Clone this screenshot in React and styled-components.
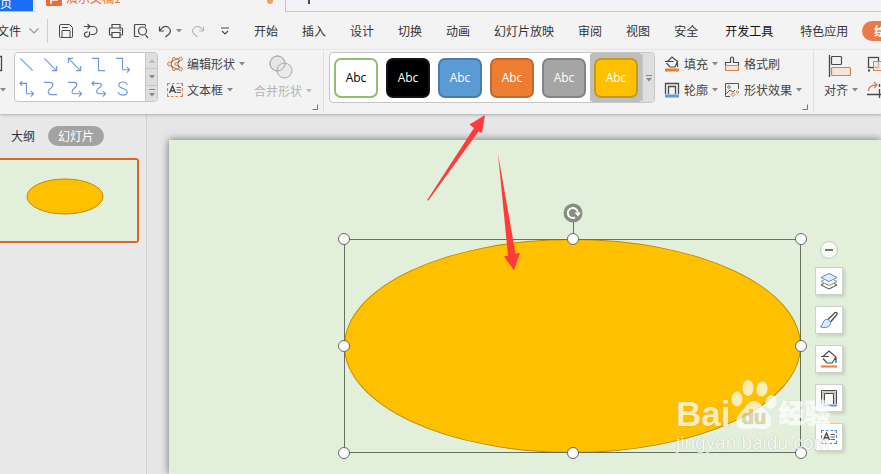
import { useState } from 'react';
import { styled, createGlobalStyle } from 'styled-components';

const GlobalStyle = createGlobalStyle`
  * {
    box-sizing: border-box;
  }

  body {
    margin: 0;
    overflow: hidden;
    background: #e6e6e6;
    color: #333;
    font-family: "Noto Sans CJK SC", sans-serif;
    font-size: 12px;
    line-height: 16px;
  }

  button {
    margin: 0;
    padding: 0;
    border: none;
    background: none;
    color: inherit;
    font: inherit;
    white-space: nowrap;
    cursor: pointer;
  }

  svg {
    display: block;
    flex: none;
  }
`;

const Page = styled.div`
  position: relative;
  display: flex;
  flex-direction: column;
  height: 100vh;
  overflow: hidden;
`;

/* tabs on top */

const TabBar = styled.div`
  display: flex;
  height: 12px;
  background: #f3f3f3;
`;

const HomeTab = styled.button`
  display: flex;
  align-items: flex-end;
  width: 37px;
  height: 12px;
  overflow: hidden;
  background: #1c6ff5;
  color: white;
  border-right: 4px solid #eceff5;
  border-bottom: 1px solid #bcc3d2;
`;

const FileTab = styled.button`
  display: flex;
  align-items: flex-end;
  gap: 4px;
  width: 248px;
  height: 6px;
  padding: 0 12px 0 9px;
  overflow: hidden;
  color: #e8703c;
`;

const TabName = styled.span`
  flex: 1;
  height: 16px;
  font-size: 12px;
  text-align: left;
`;

const TabRest = styled.div`
  flex: 1;
  display: flex;
  align-items: flex-start;
  padding-left: 22px;
  background: #f1f3f8;
  border-left: 1px solid #bcc5d5;
  border-bottom: 1px solid #c3cad6;
`;

/* menu */

const MenuBar = styled.nav`
  display: flex;
  align-items: center;
  height: 38px;
  background: #f3f3f3;
`;

const FileButton = styled.button`
  display: flex;
  justify-content: flex-end;
  flex: none;
  width: 21px;
  overflow: hidden;
`;

const ToolIcons = styled.div`
  display: flex;
  align-items: center;
  gap: 9px;
  flex: none;
  width: 207px;
  margin-left: 8px;
  padding-left: 10px;
  border-left: 1px solid #cfcfcf;
  height: 24px;
`;

const MenuItems = styled.div`
  display: flex;
  flex: none;
  gap: 24px;
`;

const WideItems = styled(MenuItems)`
  gap: 27px;
  margin-left: 27px;
`;

const MenuItem = styled.button`
  color: ${(p) => (p.$dark ? '#111' : '#333')};
`;

const ActiveMenu = styled.button`
  flex: none;
  height: 20px;
  margin-left: 14px;
  padding: 0 12px;
  border-radius: 10px;
  background: #e97a4a;
  color: white;
  font-weight: bold;
`;

/* ribbon */

const Ribbon = styled.div`
  position: relative;
  z-index: 1;
  display: flex;
  flex: none;
  height: 64px;
  background: #f3f3f3;
  box-shadow: 0 1px 3px rgba(0, 0, 0, 0.25);
`;

const EdgeTool = styled.button`
  display: flex;
  flex-direction: column;
  align-items: flex-start;
  gap: 16px;
  flex: none;
  width: 14px;
  padding-top: 5px;
`;

const Gallery = styled.div`
  display: flex;
  flex: none;
  height: ${(p) => p.$height}px;
  margin-top: 2px;
  overflow: hidden;
  background: white;
  border: 1px solid #c6c6c6;
  border-radius: 4px;
`;

const LineGrid = styled.div`
  display: grid;
  grid-template-columns: repeat(5, 24px);
  grid-template-rows: 24px 24px;
  width: 130px;
`;

const LineButton = styled.button`
  display: grid;
  place-items: center;
`;

const Scroller = styled.div`
  display: flex;
  flex-direction: column;
  width: 12px;
  background: #dedede;
  border-left: 1px solid #c6c6c6;
`;

const ScrollButton = styled.button`
  flex: 1;
  display: grid;
  place-items: center;

  & + & {
    border-top: 1px solid #c6c6c6;
  }
`;

const Rows = styled.div`
  display: grid;
  grid-template-columns: ${(p) => p.$columns || 'auto'};
  grid-template-rows: 26px 26px;
  flex: none;
  justify-items: start;
  padding-top: 1px;
  margin-left: 9px;
`;

const ToolButton = styled.button`
  display: flex;
  align-items: center;
  gap: 4px;
  color: #444;
`;

const TallButton = styled.button`
  display: flex;
  flex-direction: column;
  align-items: flex-start;
  gap: 4px;
  flex: none;
  align-self: flex-start;
  margin-left: ${(p) => (p.$muted ? 9 : 5)}px;
  padding-top: 5px;
  color: ${(p) => (p.$muted ? '#b5b5b5' : '#444')};

  > svg {
    margin-left: ${(p) => (p.$muted ? 15 : 4)}px;
  }
`;

const Label = styled.span`
  display: flex;
  align-items: center;
  gap: 4px;
`;

const Launcher = styled.button`
  flex: none;
  align-self: flex-end;
  margin-bottom: 4px;
`;

const Divider = styled.div`
  flex: none;
  width: 1px;
  height: 62px;
  margin: 0 5px;
  background: #e0e0e0;
`;

const StyleCell = styled.button`
  display: grid;
  place-items: center;
  width: 52px;
  border-radius: 3px;
  background: ${(p) => (p.$selected ? '#bebebe' : 'transparent')};
`;

const Swatch = styled.span`
  display: grid;
  place-items: center;
  width: 44px;
  height: 40px;
  border: 2px solid ${(p) => p.$edge};
  border-radius: 7px;
  background: ${(p) => p.$fill};
  color: ${(p) => p.$ink};
  font-family: "Open Sans", sans-serif;
`;

/* workspace */

const Workspace = styled.main`
  display: flex;
  flex: 1;
  min-height: 0;
`;

const Sidebar = styled.aside`
  flex: none;
  width: 147px;
  padding-top: 12px;
  background: #e8e8e8;
  border-right: 1px solid #d2d2d2;
`;

const SideTabs = styled.div`
  display: flex;
  align-items: center;
  gap: 13px;
  padding-left: 11px;
`;

const SideTab = styled.button`
  height: 20px;
  padding: ${(p) => (p.$active ? '0 10px' : '0')};
  border-radius: 10px;
  background: ${(p) => (p.$active ? '#a3a3a3' : 'none')};
  color: ${(p) => (p.$active ? 'white' : '#333')};
`;

const Thumb = styled.button`
  display: block;
  width: 139px;
  height: 85px;
  margin-top: 12px;
  padding: 0 0 9px 26px;
  border: 2px solid #d9682c;
  border-left: none;
  border-radius: 0 3px 3px 0;
  background: #e2efda;
`;

const Stage = styled.section`
  flex: 1;
  display: flex;
  min-width: 0;
  padding: 26px 0 0 22px;
  overflow: hidden;
`;

const Slide = styled.div`
  position: relative;
  flex: 1;
  background: #e2efda;
  box-shadow: 0 0 8px rgba(0, 0, 0, 0.55);
`;

const Selection = styled.div`
  position: absolute;
  left: 175px;
  top: 99px;
  width: 457px;
  height: 214px;
  outline: 1px solid #66705f;
  outline-offset: -1px;
`;

const Oval = styled.div`
  height: 100%;
  border: 1px solid #bc8c00;
  border-radius: 50%;
  background: #ffc000;
`;

const Handle = styled.span`
  position: absolute;
  z-index: 1;
  left: ${(p) => p.$x}%;
  top: ${(p) => p.$y}%;
  width: 12px;
  height: 12px;
  margin: -6px;
  border: 1px solid #666;
  border-radius: 50%;
  background: white;
`;

const Rotate = styled.button`
  position: absolute;
  left: 50%;
  top: -36px;
  width: 20px;
  margin-left: -10px;
`;

const FloatBar = styled.div`
  position: absolute;
  left: 646px;
  top: 101px;
  display: flex;
  flex-direction: column;
  align-items: center;
  gap: 11px;
`;

const Collapse = styled.button`
  display: grid;
  place-items: center;
  width: 18px;
  height: 18px;
  margin-bottom: -3px;
  border: 1px solid #c5c9c2;
  border-radius: 50%;
  background: #f8faf6;
`;

const FloatButton = styled.button`
  display: grid;
  place-items: center;
  width: 28px;
  height: 28px;
  border: 1px solid #ccd1cc;
  background: white;
  box-shadow: 2px 2px 3px rgba(0, 0, 0, 0.12);
`;

/* overlays */

const Arrows = styled.svg`
  position: absolute;
  z-index: 2;
  left: 420px;
  top: 110px;
  pointer-events: none;
`;

const Watermark = styled.div`
  position: absolute;
  z-index: 2;
  left: 507px;
  top: 240px;
  color: white;
  opacity: 0.72;
  font-family: "Liberation Sans", "Noto Sans CJK SC", sans-serif;
  text-shadow: 0 0 1px rgba(120, 120, 120, 0.8);
  pointer-events: none;
`;

const Brand = styled.div`
  display: flex;
  align-items: flex-end;
  height: 51px;
  font-size: 35px;
  line-height: 34px;
  font-weight: bold;
`;

const BrandName = styled.span`
  font-size: 26px;
  font-weight: 900;
  -webkit-text-stroke: 1px white;
`;

const Site = styled.div`
  font-size: 19px;
  line-height: 24px;
`;

const DARK = '#4a4a4a';
const ORANGE = '#d8824f';

const Svg = ({ w = 16, h = 16, color = DARK, children, ...rest }) => (
  <svg width={w} height={h} viewBox={`0 0 ${w} ${h}`} fill="none" stroke={color} aria-hidden="true" {...rest}>
    {children}
  </svg>
);

const Caret = ({ color = '#888' }) => (
  <Svg w={6} h={4}><path d="M0 0h6L3 3.5z" fill={color} stroke="none" /></Svg>
);

const LauncherIcon = () => (
  <Svg w={6} h={6} color="#777"><path d="M5.5 0.5v5h-5" /></Svg>
);

const Corner = ({ name }) => (
  <Launcher aria-label={name}><LauncherIcon /></Launcher>
);

const SaveIcon = () => (
  <Svg><path d="M3 1.5h8.5L14.5 4.5V13.5a1 1 0 0 1-1 1h-11a1 1 0 0 1-1-1V3a1.5 1.5 0 0 1 1.5-1.5zM4 14V7.5h8V14M4 4.5h6" /></Svg>
);

const ExportIcon = () => (
  <Svg><path d="M1 3.5h9a4 4 0 0 1 0 8H7.500M4.5 1l2.5 2.5L4.5 6M6.5 8.5v3a2.5 2.5 0 1 1-2.5-2.5h1" strokeWidth="1.2" /></Svg>
);

const PrintIcon = () => (
  <Svg><path d="M4 5V1.5h8V5M4 12H2.5a1 1 0 0 1-1-1V6a1 1 0 0 1 1-1h11a1 1 0 0 1 1 1v5a1 1 0 0 1-1 1H12M4 9.5h8v5H4zM11.5 7.2h1.5" strokeWidth="1.2" /></Svg>
);

const PreviewIcon = () => (
  <Svg><path d="M6 13.5H2.5a1 1 0 0 1-1-1v-10a1 1 0 0 1 1-1h9a1 1 0 0 1 1 1v1M12.5 12l2.5 3" strokeWidth="1.2" /><circle cx="9.5" cy="8" r="4" strokeWidth="1.2" /></Svg>
);

const UndoIcon = ({ color = DARK, flip }) => (
  <Svg w={14} h={14} color={color}>
    <path d="M1.5 2.5v4.500h4.500M1.500 6.800L4 4.2a4.600 4.600 0 0 1 7.500 0.300c1.500 2 1 4-0.500 5.500l-3.500 3" strokeWidth="1.2" transform={flip ? 'matrix(-1 0 0 1 14 0)' : undefined} />
  </Svg>
);

const MoreIcon = () => (
  <Svg w={10} h={10}><path d="M1 2h8M2 5l3 3 3-3" strokeWidth="1.2" /></Svg>
);

const LINES = [
  ['直线', 'M1.5 1.5l13 13'],
  ['箭头', 'M1.5 1.5l13 13M14.5 9.5v5h-5'],
  ['双箭头', 'M1.5 1.5l13 13M14.5 9.5v5h-5M1.5 6.5v-5h5'],
  ['肘形连接符', 'M1 1.5h7v13h7'],
  ['肘形箭头', 'M1 1.5h7v12h7M12.5 10.5l3 3-3 3'],
  ['肘形双箭头', 'M1 2.5h7v11h7M12.5 10.5l3 3-3 3M3.5 0L1 2.5 3.5 5'],
  ['曲线连接符', 'M1 1.5h6c5 0 4 5 1 6.5S4 14.5 9 14.5h6'],
  ['曲线箭头', 'M1 1.5h6c5 0 4 4 1 6S4 13.5 8 13.5h7M12.5 10.5l3 3-3 3'],
  ['曲线双箭头', 'M1 2.5h7c4 0 4 3 0.5 5s-3.5 6 0.5 6h6M12.5 10.5l3 3-3 3M3.5 0L1 2.5 3.5 5'],
  ['曲线', 'M13 4C12 0 4 0 4 4c0 5 9 3 9 8 0 4-8 4-10 0'],
];

const STYLES = [
  { fill: '#fff', edge: '#8fbf6f', ink: '#000' },
  { fill: '#000', edge: '#101418', ink: '#fff' },
  { fill: '#5b9bd5', edge: '#4a7dac', ink: '#fff' },
  { fill: '#ed7d31', edge: '#bd6a32', ink: '#fff' },
  { fill: '#a5a5a5', edge: '#848484', ink: '#fff' },
  { fill: '#ffc000', edge: '#c69a18', ink: '#fff' },
];

const EditIcon = () => (
  <Svg color={ORANGE}>
    <path d="M3 8l4-5h6.5L10 8l3.5 5H7z" stroke={DARK} strokeWidth="1.2" />
    <g fill="#f8d8c5">
      <circle cx="2.5" cy="8" r="2" /><circle cx="7" cy="3" r="1.6" /><circle cx="13.5" cy="3" r="1.8" />
      <circle cx="9.5" cy="8" r="1.6" /><circle cx="7" cy="13" r="1.6" /><circle cx="13.5" cy="13" r="1.8" />
    </g>
  </Svg>
);

const TextBoxIcon = ({ color = ORANGE }) => (
  <Svg color={color}>
    <path d="M0.5 4V1.5H3M5 1.5h2.5M9.5 1.5H12M13.5 1.5h2V4M15.5 6v3M15.5 11.5v3H13M11 14.5H8.5M6.5 14.5H4M2.5 14.5h-2v-3M0.5 9.5V6" strokeWidth="1.2" />
    <path d="M2.5 11l3-7 3 7M3.5 8.7h4" stroke={DARK} strokeWidth="1.4" />
    <path d="M9.5 5.5H14M9.5 8H14M9.5 10.5H14" stroke="#666" />
  </Svg>
);

const MergeIcon = () => (
  <Svg w={24} h={24} color="#aaa">
    <circle cx="8.5" cy="8.5" r="7.5" fill="#e6e6e6" /><circle cx="15.5" cy="15.5" r="7.5" fill="#e6e6e6" fillOpacity="0.7" />
    <circle cx="8.5" cy="8.5" r="7.5" />
  </Svg>
);

const FillIcon = () => (
  <Svg>
    <path d="M1 5.5h8.5M3.5 5.5L8 1l5.5 4.5L11 11H6L2.5 7M13.5 5.5V11" strokeWidth="1.2" />
    <path d="M1 14h14" stroke="#ed7d31" strokeWidth="3" />
  </Svg>
);

const OutlineIcon = () => (
  <Svg>
    <path d="M1.5 12V1.5h13V12M4.5 12V4.5h7V12" strokeWidth="1.3" />
    <path d="M1 14h14" stroke="#5b9bd5" strokeWidth="3" />
  </Svg>
);

const BrushIcon = () => (
  <Svg>
    <path d="M1.5 9V6.5h5v-4a1.5 1.5 0 0 1 3 0v4h5V9" strokeWidth="1.2" />
    <path d="M1.5 9.5h13v5h-13z" stroke={ORANGE} fill="#f8e4d8" strokeWidth="1.2" />
  </Svg>
);

const EffectIcon = () => (
  <Svg>
    <path d="M6 14.5H1.5v-13h13V7M2 12l4-4 3 2 2-2" stroke="#555" />
    <circle cx="5" cy="5" r="1.3" stroke="#777" />
    <path d="M9 10.5l2 2-2 2-2-2zM13.5 8.5l1.500 1.500-1.500 1.500L12 10z" stroke={ORANGE} fill="#f8e4d8" />
  </Svg>
);

const AlignIcon = () => (
  <Svg w={24} h={23}>
    <path d="M1.5 0v22" strokeWidth="1.3" /><rect x="3.5" y="1.5" width="10" height="8" rx="1" strokeWidth="1.2" />
    <rect x="3.5" y="12.5" width="19" height="8" rx="1" stroke={ORANGE} fill="#f6e3d9" strokeWidth="1.2" />
  </Svg>
);

const GroupIcon = () => (
  <Svg w={18} h={18}>
    <rect x="1.5" y="2.5" width="10" height="10" strokeWidth="1.3" />
    <rect x="6.5" y="6.5" width="12" height="9" stroke={ORANGE} fill="#f6e3d9" fillOpacity="0.7" />
    <path d="M1 15.5h2" strokeWidth="2" /><path d="M14 3.5h2" stroke={ORANGE} strokeWidth="2" />
  </Svg>
);

const RotateToolIcon = () => (
  <Svg w={18} h={18}>
    <path d="M1.5 10V9q1-5 8-5M7 1l3 3-3 3" stroke={ORANGE} strokeWidth="1.3" />
    <path d="M0 13.5h18M12.5 3v3M12.5 8v9" strokeWidth="1.3" />
  </Svg>
);

const LayersIcon = () => (
  <Svg w={20} h={20}>
    <path d="M2 14l8 4 8-4-3-1.5M2 14l3-1.5" /><path d="M2 10.5l8 4 8-4M2 10.5L5 9M18 10.5L15 9" stroke="#888" />
    <path d="M10 2.5l8 4-8 4-8-4z" stroke="#5586d6" fill="#e3edfb" />
  </Svg>
);

const PaintIcon = () => (
  <Svg w={20} h={20}>
    <path d="M9 9.5L16 2.5a1.5 1.5 0 0 1 2 2L11.5 12" strokeWidth="1.3" />
    <path d="M9 9.5q-3-1-4.5 2Q3.5 15 1.5 17q7 1.5 9-1.5 1.5-2 1-3.5z" stroke="#5586d6" fill="#dce9fb" />
  </Svg>
);

const FloatFillIcon = () => (
  <Svg w={20} h={20}>
    <path d="M2 7.5h8M4 7.5L10 2l7 6-4 6H8L4 9.5M17 8v6" strokeWidth="1.2" />
    <path d="M2 17.5h16" stroke="#ed7d31" strokeWidth="2" />
  </Svg>
);

const FloatOutlineIcon = () => (
  <Svg w={20} h={20}>
    <path d="M2.5 16V2.5h15V16M5.5 16V5.5h9V16" /><path d="M4 16V4h12v12" stroke="#999" />
    <path d="M4 17.500h14" stroke="#5b9bd5" strokeWidth="2" />
  </Svg>
);

const HANDLES = [[0, 0], [50, 0], [100, 0], [0, 50], [100, 50], [0, 100], [50, 100], [100, 100]];

const FLOAT_TOOLS = [
  ['叠放次序', <LayersIcon />],
  ['形状样式', <PaintIcon />],
  ['形状填充', <FloatFillIcon />],
  ['形状轮廓', <FloatOutlineIcon />],
  ['编辑文字', <TextBoxIcon color="#5586d6" />],
];

const MENUS = ['开始', '插入', '设计', '切换', '动画', '幻灯片放映', '审阅', '视图', '安全'];

function Header() {
  return (
    <>
      <TabBar>
        <HomeTab>页</HomeTab>
        <FileTab>
          <Svg><rect width="16" height="16" rx="1" fill="#ec6a41" stroke="none" /><path d="M5 5v9M5 6h6v4H5" stroke="white" strokeWidth="1.5" /></Svg>
          <TabName>演示文稿1</TabName>
          <Svg w={6} h={10}><circle cx="3" cy="5" r="3" fill="#eea162" stroke="none" /></Svg>
        </FileTab>
        <TabRest><Svg w={2} h={4}><path d="M1 0v4" strokeWidth="2" /></Svg></TabRest>
      </TabBar>
      <MenuBar>
        <FileButton>文件</FileButton>
        <Svg w={18} h={10} color="#999"><path d="M8.5 2.5l4.5 4.5 4.5-4.5" strokeWidth="1.2" /></Svg>
        <ToolIcons>
          <button aria-label="保存"><SaveIcon /></button>
          <button aria-label="输出"><ExportIcon /></button>
          <button aria-label="打印"><PrintIcon /></button>
          <button aria-label="打印预览"><PreviewIcon /></button>
          <ToolButton aria-label="撤销"><UndoIcon /><Caret /></ToolButton>
          <button aria-label="恢复"><UndoIcon color="#bbb" flip /></button>
          <ToolButton aria-label="更多"><Svg w={2} h={4} /><MoreIcon /></ToolButton>
        </ToolIcons>
        <MenuItems>
          {MENUS.map((m) => <MenuItem key={m}>{m}</MenuItem>)}
        </MenuItems>
        <WideItems>
          <MenuItem $dark>开发工具</MenuItem>
          <MenuItem>特色应用</MenuItem>
        </WideItems>
        <ActiveMenu>绘图工具</ActiveMenu>
      </MenuBar>
    </>
  );
}

function Tools({ selected, onSelect }) {
  return (
    <Ribbon>
      <EdgeTool aria-label="形状">
        <Svg w={3} h={17}><path d="M0 1.5h1.5v14H0" strokeWidth="1.3" /></Svg>
        <Caret />
      </EdgeTool>
      <Gallery $height={50}>
        <LineGrid>
          {LINES.map(([name, d]) => (
            <LineButton key={name} aria-label={name}>
              <svg width="16" height="16" viewBox="0 0 17 17" fill="none" stroke="#6f97dc" strokeWidth="1.2"><path d={d} /></svg>
            </LineButton>
          ))}
        </LineGrid>
        <Scroller>
          <ScrollButton aria-label="向上"><Svg w={6} h={4}><path d="M0 4h6L3 0z" fill="#bbb" stroke="none" /></Svg></ScrollButton>
          <ScrollButton aria-label="向下"><Caret /></ScrollButton>
          <ScrollButton aria-label="展开"><Svg w={6} h={8}><path d="M0 0.5h6" stroke="#888" /><path d="M0 4h6L3 7.5z" fill="#888" stroke="none" /></Svg></ScrollButton>
        </Scroller>
      </Gallery>
      <Rows>
        <ToolButton><EditIcon />编辑形状<Caret /></ToolButton>
        <ToolButton><TextBoxIcon />文本框<Caret /></ToolButton>
      </Rows>
      <TallButton $muted>
        <MergeIcon />
        <Label>合并形状<Caret color="#bbb" /></Label>
      </TallButton>
      <Corner name="插入形状设置" />
      <Divider />
      <Gallery $height={51}>
        {STYLES.map((s, i) => (
          <StyleCell key={s.fill} $selected={i === selected} onClick={() => onSelect(i)}>
            <Swatch $fill={s.fill} $edge={s.edge} $ink={s.ink}>Abc</Swatch>
          </StyleCell>
        ))}
        <Scroller>
          <ScrollButton aria-label="更多样式"><Svg w={6} h={8}><path d="M0 1.5h6" stroke="#888" /><path d="M0 4h6L3 7.5z" fill="#888" stroke="none" /></Svg></ScrollButton>
        </Scroller>
      </Gallery>
      <Rows $columns="60px auto">
        <ToolButton><FillIcon />填充<Caret /></ToolButton>
        <ToolButton><BrushIcon />格式刷</ToolButton>
        <ToolButton><OutlineIcon />轮廓<Caret /></ToolButton>
        <ToolButton><EffectIcon />形状效果<Caret /></ToolButton>
      </Rows>
      <Corner name="形状样式设置" />
      <Divider />
      <TallButton>
        <AlignIcon />
        <Label>对齐<Caret /></Label>
      </TallButton>
      <Rows>
        <ToolButton aria-label="组合"><GroupIcon /></ToolButton>
        <ToolButton aria-label="旋转"><RotateToolIcon /></ToolButton>
      </Rows>
    </Ribbon>
  );
}

function App() {
  const [selected, setSelected] = useState(5);

  return (
    <Page>
      <GlobalStyle />
      <Header />
      <Tools selected={selected} onSelect={setSelected} />
      <Workspace>
        <Sidebar>
          <SideTabs>
            <SideTab>大纲</SideTab>
            <SideTab $active>幻灯片</SideTab>
          </SideTabs>
          <Thumb aria-label="幻灯片 1">
            <Svg w={78} h={37}><ellipse cx="39" cy="18.5" rx="38" ry="17.5" fill="#ffc000" stroke="#bc8c00" /></Svg>
          </Thumb>
        </Sidebar>
        <Stage>
          <Slide>
            <Selection>
              <Oval />
              <Rotate aria-label="旋转形状">
                <Svg w={20} h={32}>
                  <path d="M10.5 18v14" stroke="#66705f" />
                  <circle cx="10" cy="10" r="9.5" fill="#868e81" stroke="none" />
                  <path d="M12 14.5a5 5 0 1 1 2.8-5" stroke="white" strokeWidth="2" />
                  <path d="M11.5 9.5H18l-3 4z" fill="white" stroke="none" />
                </Svg>
              </Rotate>
              {HANDLES.map(([x, y]) => <Handle key={`${x}-${y}`} $x={x} $y={y} />)}
            </Selection>
            <FloatBar>
              <Collapse aria-label="收起"><Svg w={8} h={2}><path d="M0 1h8" stroke="#777" strokeWidth="2" /></Svg></Collapse>
              {FLOAT_TOOLS.map(([name, icon]) => <FloatButton key={name} aria-label={name}>{icon}</FloatButton>)}
            </FloatBar>
            <Watermark>
              <Brand>
                Bai
                <svg width="48" height="51" viewBox="-1 0 48 51" fill="white">
                  <ellipse cx="6" cy="19" rx="5.500" ry="7.500" /><ellipse cx="17" cy="8" rx="5.500" ry="8" />
                  <ellipse cx="31" cy="9" rx="5.5" ry="7.5" transform="rotate(8 31 9)" /><ellipse cx="40" cy="22" rx="5.5" ry="7" transform="rotate(15 40 22)" />
                  <path d="M23 21c6 0 8 6 13 11 8 8 4 17-3 17-4 0-6-1-10-1s-6 1-10 1c-8 0-11-9-3-17 5-5 7-11 13-11z" />
                  <text x="23" y="44" textAnchor="middle" fontSize="20" fontWeight="bold" fill="#dfcf91">du</text>
                </svg>
                <BrandName>经验</BrandName>
              </Brand>
              <Site>jingyan.baidu.com</Site>
            </Watermark>
          </Slide>
        </Stage>
      </Workspace>
      <Arrows width="110" height="165" viewBox="420 110 110 165" fill="#ff3b3b" aria-hidden="true">
        <path d="M485 115l-15.5 9.5 4.5 3.5-46.8 72 1 0.8 50.3-69.3 3.5 1.5z" />
        <path d="M498 154l10 101.5-4 1 10 14 6-17.5-4.5 0.5z" />
      </Arrows>
    </Page>
  );
}

export default App;
